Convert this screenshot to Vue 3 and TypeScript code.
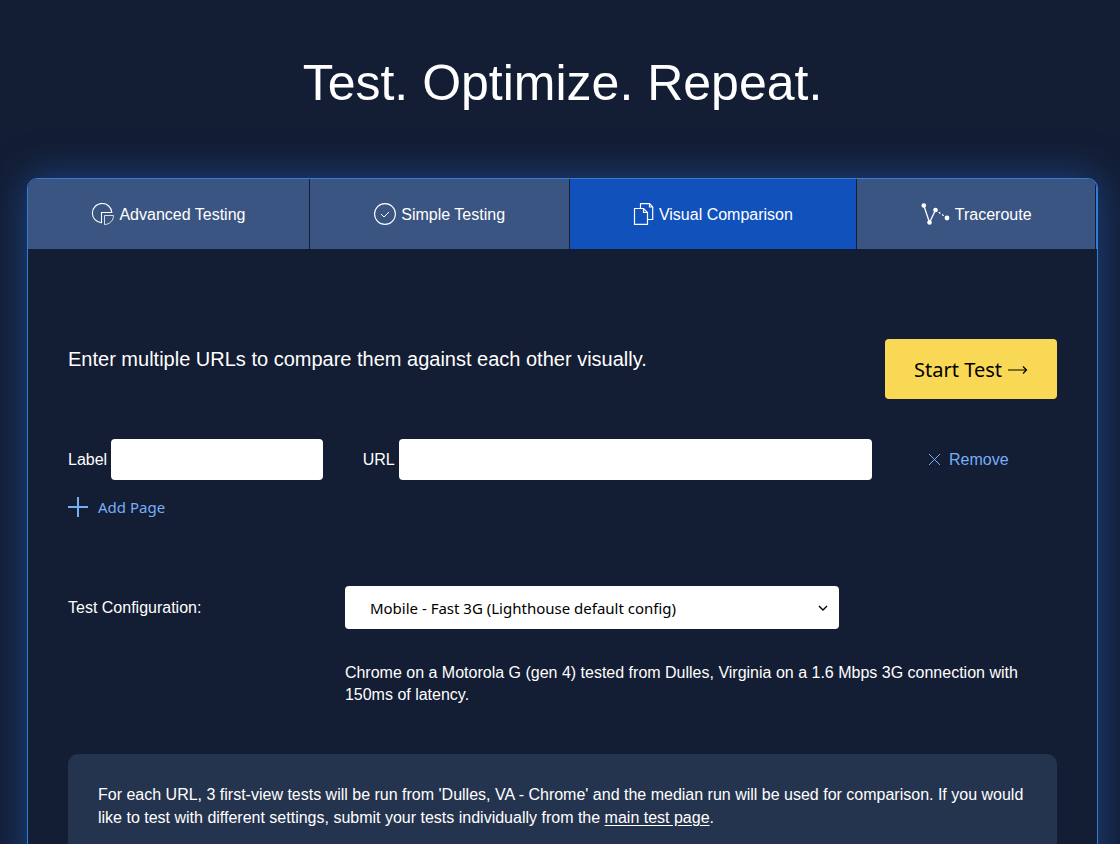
<script setup lang="ts">
import { ref } from 'vue'

type TabId = 'advanced' | 'simple' | 'visual' | 'traceroute'

interface Tab {
  id: TabId
  label: string
}

interface PageRow {
  id: number
  label: string
  url: string
}

const tabs: Tab[] = [
  { id: 'advanced', label: 'Advanced Testing' },
  { id: 'simple', label: 'Simple Testing' },
  { id: 'visual', label: 'Visual Comparison' },
  { id: 'traceroute', label: 'Traceroute' },
]

const activeTab = ref<TabId>('visual')
const rows = ref<PageRow[]>([{ id: 1, label: '', url: '' }])
const config = ref('mobile-fast-3g')
let nextId = 2

function addPage(): void {
  rows.value.push({ id: nextId++, label: '', url: '' })
}

function removePage(id: number): void {
  rows.value = rows.value.filter((row) => row.id !== id)
}
</script>

<template>
  <main class="page">
    <h1 class="title">Test. Optimize. Repeat.</h1>

    <section class="panel">
      <nav class="tabs">
        <a
          v-for="tab in tabs"
          :key="tab.id"
          href="#"
          class="tab"
          :class="{ active: tab.id === activeTab }"
          @click.prevent="activeTab = tab.id"
        >
          <svg v-if="tab.id === 'advanced'" width="23" height="22" viewBox="0 0 23 22" fill="none" stroke="#fff" aria-hidden="true">
            <path d="M20.800 9.500A9.700 9.700 0 1 0 10.500 19.800V9.500Z" stroke-width="1.100" />
            <path d="M13.500 12.500H22.500C22.500 17.500 18.500 21.500 13.500 21.500Z" stroke-width="1" stroke-opacity="0.8" />
          </svg>
          <svg v-else-if="tab.id === 'simple'" width="23" height="22" viewBox="0 0 23 22" fill="none" stroke="#fff" aria-hidden="true">
            <circle cx="12" cy="11" r="10.400" stroke-width="1.100" />
            <path d="M8 11L11 14L16 9" stroke-width="1" />
          </svg>
          <svg v-else-if="tab.id === 'visual'" width="21" height="22" viewBox="0 0 21 22" fill="none" stroke="#fff" stroke-width="1.200" aria-hidden="true">
            <path d="M1.500 5.500H10.500L14.500 9.500V21.300H1.500Z" />
            <path d="M10.500 5.500V9.500H14.500" />
            <path d="M7.500 5.500V0.700H16.500L19.700 4V16.500H14.500" />
            <path d="M16.500 0.700V4H19.700" />
          </svg>
          <svg v-else width="29" height="22" viewBox="0 0 29 22" fill="none" stroke="#fff" aria-hidden="true">
            <path d="M2.800 2.500L8.500 19.500L14.500 7" stroke-width="1.300" />
            <path d="M14.500 7L26 15" stroke-width="1.300" stroke-dasharray="2 2" />
            <g fill="#fff" stroke="none">
              <circle cx="2.800" cy="2.500" r="2.300" />
              <circle cx="8.500" cy="19.500" r="2.300" />
              <circle cx="14.500" cy="7" r="2.300" />
              <circle cx="26" cy="15" r="2.400" />
            </g>
          </svg>
          <span>{{ tab.label }}</span>
        </a>
      </nav>

      <form class="content" @submit.prevent>
        <div class="intro">
          <p class="lead">Enter multiple URLs to compare them against each other visually.</p>
          <button type="submit" class="start">
            <span>Start Test</span>
            <svg width="20" height="12" viewBox="0 0 20 12" fill="none" stroke="#000" stroke-width="1.200" aria-hidden="true">
              <path d="M0 7H18.500M15 3.500L18.500 7L15 10.500" />
            </svg>
          </button>
        </div>

        <div v-for="row in rows" :key="row.id" class="row">
          <div class="field label-field">
            <label :for="`label-${row.id}`">Label</label>
            <input :id="`label-${row.id}`" v-model="row.label" type="text" />
          </div>
          <div class="field url-field">
            <label :for="`url-${row.id}`">URL</label>
            <input :id="`url-${row.id}`" v-model="row.url" type="text" />
          </div>
          <div class="remove-cell">
            <a href="#" class="remove" @click.prevent="removePage(row.id)">
              <svg width="13" height="13" viewBox="0 0 13 13" fill="none" stroke="#77aef5" aria-hidden="true">
                <path d="M1 1L12 12M12 1L1 12" />
              </svg>
              <span>Remove</span>
            </a>
          </div>
        </div>

        <button type="button" class="add" @click="addPage">
          <svg width="20" height="20" viewBox="0 0 20 20" fill="none" stroke="#77aef5" stroke-width="2" aria-hidden="true">
            <path d="M10 0V20M0 10H20" />
          </svg>
          <span>Add Page</span>
        </button>

        <div class="config">
          <label for="config">Test Configuration:</label>
          <div class="config-value">
            <div class="select-wrap">
              <select id="config" v-model="config">
                <option value="mobile-fast-3g">Mobile - Fast 3G (Lighthouse default config)</option>
              </select>
              <svg class="chevron" width="10" height="7" viewBox="0 0 10 7" fill="none" stroke="#000" stroke-width="1.400" aria-hidden="true">
                <path d="M1 1L5 5L9 1" />
              </svg>
            </div>
            <p class="description">
              Chrome on a Motorola G (gen 4) tested from Dulles, Virginia on a 1.6 Mbps 3G connection with 150ms of latency.
            </p>
          </div>
        </div>

        <p class="note">
          For each URL, 3 first-view tests will be run from 'Dulles, VA - Chrome' and the median run will be used for
          comparison. If you would like to test with different settings, submit your tests individually from the
          <a href="#">main test page</a>.
        </p>
      </form>
    </section>
  </main>
</template>

<style>
html,
body {
  background: #131d34;
}

html {
  scrollbar-width: none;
}
</style>

<style scoped>
.page {
  padding: 51px 22px 40px 27px;
  color: #fff;
  font-family: "Liberation Sans", Arial, sans-serif;
  font-size: 16px;
  line-height: 22px;
}

.title {
  margin: 0 0 63px;
  font-size: 50px;
  font-weight: 400;
  line-height: 64px;
  text-align: center;
}

.panel {
  border: 1px solid #347cdc;
  border-radius: 10px;
  background: #131d34;
  box-shadow: 0 0 40px #1d4685;
}

.tabs {
  display: flex;
  height: 70px;
  border-right: 1px solid #347cdc;
  border-radius: 9px 9px 0 0;
  overflow: hidden;
}

.tab {
  display: flex;
  flex: 1 1 auto;
  align-items: center;
  justify-content: center;
  gap: 5px;
  border-right: 1px solid #131d34;
  background: #3b5582;
  color: #fff;
  text-decoration: none;
  white-space: nowrap;
}

.tab span {
  padding-top: 2px;
}

.tab.active {
  background: #1151bc;
}

.content {
  padding: 90px 40px 40px;
}

.intro {
  display: flex;
  align-items: flex-start;
  justify-content: space-between;
  margin-bottom: 40px;
}

.lead {
  margin: 6px 0 0;
  font-size: 20px;
  line-height: 28px;
}

button {
  border: 0;
  font-family: "Noto Sans", sans-serif;
  cursor: pointer;
}

.start {
  display: flex;
  align-items: center;
  gap: 6px;
  height: 60px;
  padding: 0 29px;
  border-radius: 4px;
  background: #f9d856;
  color: #000;
  font-size: 20px;
}

.row {
  display: flex;
  gap: 40px;
  margin-bottom: 16px;
}

.field {
  display: flex;
  align-items: center;
  gap: 4px;
  min-width: 0;
}

.label-field {
  flex: 1 1 0;
}

.url-field {
  flex: 2 1 0;
}

input {
  flex: 1;
  box-sizing: border-box;
  min-width: 0;
  height: 41px;
  padding: 0 12px;
  border: 0;
  border-radius: 4px;
  background: #fff;
  font-size: 16px;
}

.remove-cell {
  display: flex;
  align-items: center;
  box-sizing: border-box;
  width: 145px;
  padding-left: 16px;
}

.remove {
  display: flex;
  align-items: center;
  gap: 8px;
  color: #77aef5;
  text-decoration: none;
}

.add {
  display: flex;
  align-items: center;
  gap: 10px;
  padding: 0;
  background: none;
  color: #77aef5;
  font-size: 15px;
  line-height: 22px;
}

.config {
  display: flex;
  margin: 68px 0 48px;
}

.config > label {
  flex: 0 0 28%;
  padding-top: 11px;
}

.config-value {
  flex: 1;
}

.select-wrap {
  position: relative;
  width: 69.4%;
  min-width: 360px;
}

select {
  display: block;
  width: 100%;
  height: 43px;
  padding: 0 40px 0 25px;
  border: 0;
  border-radius: 4px;
  appearance: none;
  background: #fff;
  color: #000;
  font-family: "Noto Sans", sans-serif;
  font-size: 15px;
}

.chevron {
  position: absolute;
  top: 19px;
  right: 11px;
  pointer-events: none;
}

.description {
  margin: 33px 0 0;
}

.note {
  margin: 0;
  padding: 29px 30px;
  border-radius: 10px;
  background: #25344e;
  line-height: 23px;
}

.note a {
  color: #fff;
  text-underline-offset: 2px;
}
</style>
